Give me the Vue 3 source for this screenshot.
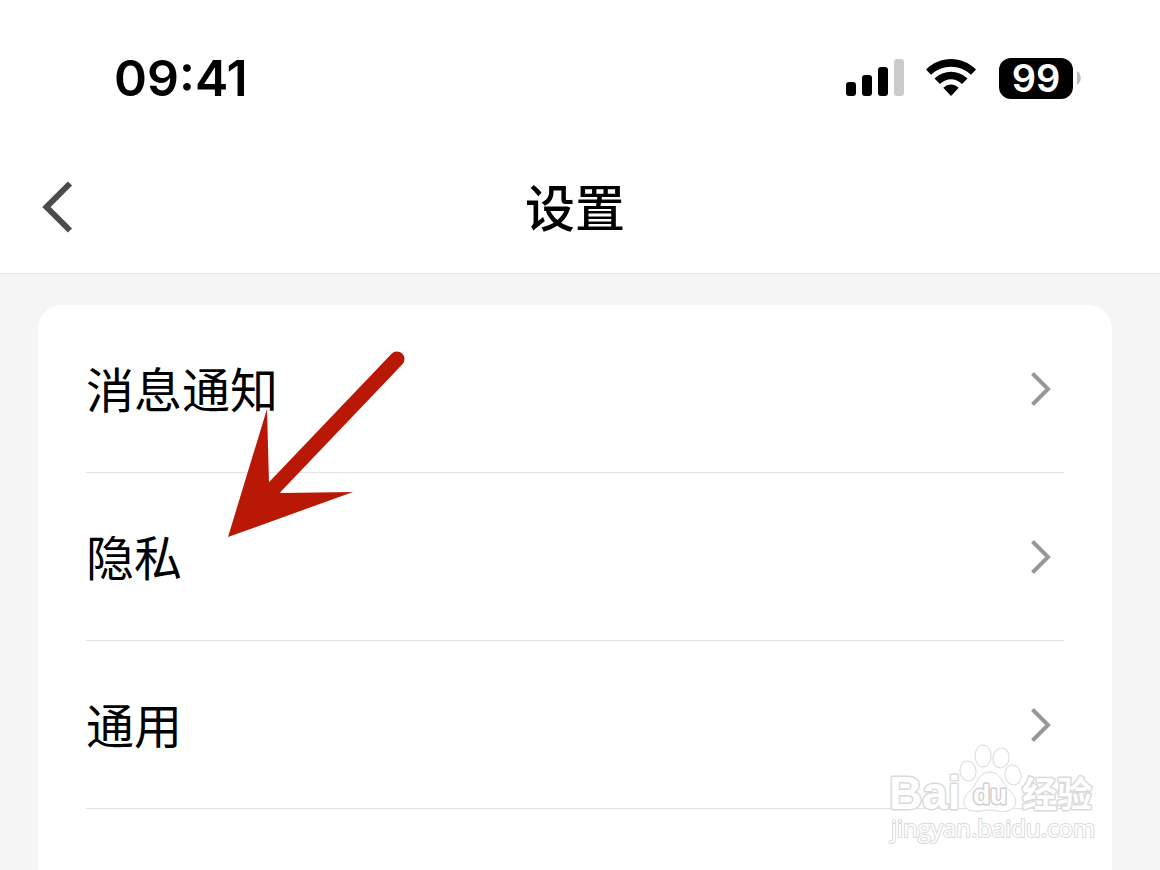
<script setup>
const rows = ['消息通知', '隐私', '通用']
</script>

<template>
  <div class="page">
    <header class="header">
      <div class="status">
        <span class="time">09:41</span>
        <div class="indicators">
          <svg class="signal" width="58" height="38" viewBox="0 0 58 38" aria-hidden="true">
            <rect x="0" y="23" width="10" height="14" rx="3" />
            <rect x="16" y="16" width="10" height="21" rx="3" />
            <rect x="32" y="8" width="10" height="29" rx="3" />
            <rect x="48" y="0" width="10" height="37" rx="3" fill="#cbcbcb" />
          </svg>
          <svg class="wifi" width="50" height="38" viewBox="0 0 50 38" aria-hidden="true">
            <path d="M0 10.500C14 -3.500 36 -3.500 50 10.500L45 15.800C34 5 16 5 5 15.800Z" />
            <path d="M8.500 19.600C18 10.600 32 10.600 41.500 19.600L36 25C29.500 18.500 20.500 18.500 14 25Z" />
            <path d="M17.300 28.800C22 24.300 28 24.300 32.700 28.800L25 37Z" />
          </svg>
          <div class="battery">
            <span class="level">99</span>
            <svg width="4" height="14" viewBox="0 0 4 14" aria-hidden="true">
              <path d="M0 0C5 3 5 11 0 14Z" fill="#bdbdbd" />
            </svg>
          </div>
        </div>
      </div>
      <nav class="nav">
        <button class="back" type="button" aria-label="返回">
          <svg width="31" height="52" viewBox="0 0 31 52" aria-hidden="true">
            <path d="M28 2.500L4.500 26L28 49.500" fill="none" stroke="#4b4b4b" stroke-width="6" />
          </svg>
        </button>
        <h1 class="title">设置</h1>
      </nav>
    </header>

    <main class="content">
      <div class="card">
        <button v-for="row in rows" :key="row" class="row" type="button">
          <span>{{ row }}</span>
          <svg width="20" height="34" viewBox="0 0 20 34" aria-hidden="true">
            <path d="M1.500 1.500L17 17L1.500 32.500" fill="none" stroke="#979797" stroke-width="4" />
          </svg>
        </button>
      </div>
    </main>

    <svg class="arrow" width="180" height="190" viewBox="0 0 180 190" aria-hidden="true">
      <path d="M169 9L43 141" stroke="#b91807" stroke-width="15" stroke-linecap="round" />
      <path d="M0 187L39 59L41 133L53 143L125 142Z" fill="#b91807" />
    </svg>

    <svg class="watermark" width="216" height="106" viewBox="0 0 216 106">
      <g class="outline">
        <text class="brand" x="3" y="68">Bai</text>
        <path d="M104 31C92 31 91 44 84 50C75 57 76 70 88 70C94 71 98 69 104 69C110 69 115 72 121 70C132 68 132 57 124 50C117 44 115 31 104 31Z" />
        <ellipse cx="82" cy="30" rx="8" ry="10" transform="rotate(-8 82 30)" />
        <ellipse cx="97" cy="15" rx="8" ry="11" />
        <ellipse cx="115" cy="17" rx="8" ry="10" transform="rotate(10 115 17)" />
        <ellipse cx="127" cy="34" rx="8" ry="10" transform="rotate(-12 127 34)" />
        <text class="du" x="87" y="63">du</text>
        <text class="cn" x="136" y="66">经验</text>
        <text class="url" x="5" y="96">jingyan.baidu.com</text>
      </g>
    </svg>
  </div>
</template>

<style>
body {
  margin: 0;
}
</style>

<style scoped>
.page {
  position: relative;
  display: flex;
  flex-direction: column;
  min-height: 100vh;
  background: #f5f5f5;
  color: #000;
  font-family: "Noto Sans CJK SC", sans-serif;
  overflow: hidden;
}
.header {
  background: #fff;
  border-bottom: 1px solid #e8e8e8;
}
.status {
  display: flex;
  align-items: center;
  justify-content: space-between;
  height: 124px;
  padding: 16px 79px 0 114px;
  font-family: Inter, sans-serif;
  font-weight: 600;
}
.time {
  font-size: 50px;
  line-height: 60px;
}
.indicators {
  display: flex;
  align-items: center;
}
.wifi {
  margin: 0 23px 0 22px;
}
.battery {
  display: flex;
  align-items: center;
  gap: 4px;
}
.level {
  width: 74px;
  border-radius: 12px;
  background: #000;
  color: #fff;
  font-size: 38px;
  line-height: 41px;
  text-align: center;
}
.nav {
  display: grid;
  grid-template-columns: 1fr auto 1fr;
  align-items: center;
  height: 133px;
  padding: 0 48px 0 38px;
}
.back {
  justify-self: start;
  display: flex;
  padding: 4px;
  border: 0;
  background: none;
}
.title {
  margin: 0;
  padding-bottom: 4px;
  font-size: 50px;
  line-height: 60px;
  font-weight: 500;
}
.content {
  flex: 1;
  display: flex;
  padding: 31px 48px 0 38px;
}
.card {
  flex: 1;
  padding: 0 48px;
  border-radius: 24px 24px 0 0;
  background: #fff;
}
.row {
  display: flex;
  align-items: center;
  justify-content: space-between;
  width: 100%;
  height: 168px;
  padding: 0 13px 0 0;
  border: 0;
  border-bottom: 1px solid #e3e3e3;
  background: none;
  color: #000;
  font-family: inherit;
  font-size: 48px;
  line-height: 60px;
}
.row span {
  padding-bottom: 4px;
}
.arrow {
  position: absolute;
  left: 228px;
  top: 350px;
  pointer-events: none;
}
.watermark {
  position: absolute;
  right: 58px;
  bottom: 23px;
  pointer-events: none;
}
.outline {
  fill: #fff;
  stroke: #dadada;
  stroke-width: 1px;
}
.outline text {
  paint-order: stroke;
  stroke-width: 3px;
  stroke-linejoin: round;
}
.outline .brand {
  font: bold 46px "Liberation Sans", sans-serif;
}
.outline .du {
  font: bold 28px "Liberation Sans", sans-serif;
  stroke: #cfcfcf;
}
.outline .cn {
  font: bold 35px "Noto Sans CJK SC", sans-serif;
}
.outline .url {
  font: 24px "Open Sans", sans-serif;
  stroke-width: 2px;
}
</style>
